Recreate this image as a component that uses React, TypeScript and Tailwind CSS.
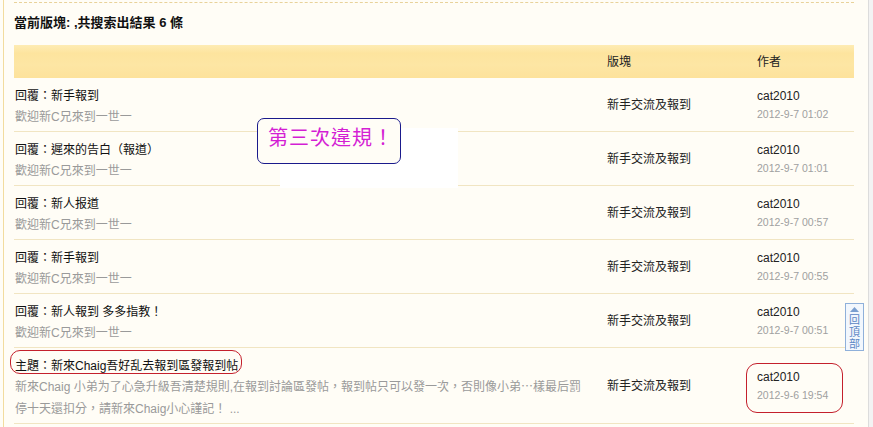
import React from 'react';

interface Post {
  title: string;
  summary: string[];
  board: string;
  author: string;
  date: string;
  marked?: boolean;
}

const posts: Post[] = [
  { title: '回覆：新手報到', summary: ['歡迎新C兄來到一世一'], board: '新手交流及報到', author: 'cat2010', date: '2012-9-7 01:02' },
  { title: '回覆：遲來的告白（報道）', summary: ['歡迎新C兄來到一世一'], board: '新手交流及報到', author: 'cat2010', date: '2012-9-7 01:01' },
  { title: '回覆：新人报道', summary: ['歡迎新C兄來到一世一'], board: '新手交流及報到', author: 'cat2010', date: '2012-9-7 00:57' },
  { title: '回覆：新手報到', summary: ['歡迎新C兄來到一世一'], board: '新手交流及報到', author: 'cat2010', date: '2012-9-7 00:55' },
  { title: '回覆：新人報到 多多指教！', summary: ['歡迎新C兄來到一世一'], board: '新手交流及報到', author: 'cat2010', date: '2012-9-7 00:51' },
  {
    title: '主題：新來Chaig吾好乱去報到區發報到帖',
    summary: [
      '新來Chaig 小弟为了心急升級吾清楚規則,在報到討論區發帖，報到帖只可以發一次，否則像小弟⋯樣最后罰',
      '停十天還扣分，請新來Chaig小心謹記！ ...',
    ],
    board: '新手交流及報到',
    author: 'cat2010',
    date: '2012-9-6 19:54',
    marked: true,
  },
];

const PostRow: React.FC<{ post: Post }> = ({ post }) => (
  <div className="grid grid-cols-[593px_150px_1fr] border-b border-[#f1e5c2]">
    <div className="pt-[8px] pb-[3px] pl-px">
      <div className="leading-[20px] text-[#111] whitespace-nowrap">
        <span className="relative inline-block">
          {post.title}
          {post.marked && (
            <span className="absolute left-[-5px] top-[-6px] w-[232px] h-[24px] rounded-[10px] border border-[#c4202c]" />
          )}
        </span>
      </div>
      {post.summary.map((line) => (
        <div key={line} className="leading-[22px] text-[#9a9a9a] whitespace-nowrap">
          {line}
        </div>
      ))}
    </div>
    <div className="flex items-center text-[#222]">{post.board}</div>
    <div className="relative flex flex-col justify-center">
      <div className="leading-[18px] text-[#222]">{post.author}</div>
      <div className="leading-[18px] text-[10.5px] text-[#a0a0a0]">{post.date}</div>
      {post.marked && (
        <span className="absolute left-[-11px] top-[15px] w-[97px] h-[50px] rounded-[11px] border border-[#c4202c]" />
      )}
    </div>
  </div>
);

export default function App() {
  return (
    <div className="relative w-[873px] h-[427px] overflow-hidden bg-[#fffdf6] text-[12px] font-['Liberation_Sans','Noto_Sans_CJK_TC',sans-serif] flex">
      <div className="ml-[3px] w-[852px] border-l border-[#f2dc9e] pl-[10px] pr-px">
        <div className="mt-[2px] border-t border-dashed border-[#e8d29a]" />
        <div className="h-[42px] pt-[12px] font-bold text-[13px] leading-[16px] text-[#111]">
          當前版塊: ,共搜索出結果 6 條
        </div>
        <div className="grid grid-cols-[593px_150px_1fr] h-[33px] items-center bg-[linear-gradient(#feecb4,#fde49e_25%,#fde6a4_60%,#fde29b)] text-[#222]">
          <div />
          <div>版塊</div>
          <div>作者</div>
        </div>
        {posts.map((post, i) => (
          <PostRow key={i} post={post} />
        ))}
      </div>
      <div className="flex-1" />
      <div className="w-[5px] border-l border-[#dcdcdc] bg-[#f3f3f3]" />

      {/* white patch left over behind the popup */}
      <div className="absolute left-[280px] top-[128px] w-[178px] h-[60px] bg-white" />
      <div className="absolute left-[257px] top-[118px] w-[144px] h-[46px] rounded-[7px] border border-[#1a1a8c] bg-[#fffdf6] pl-[10px] pt-[6px]">
        <span className="text-[20px] leading-[26px] text-[#d41fd4] tracking-[1px]">第三次違規！</span>
      </div>

      <div className="absolute left-[845px] top-[303px] w-[19px] h-[48px] border border-[#8fb0da] bg-[#f2f7fd] flex flex-col items-center pt-[3px]">
        <svg width="9" height="5" viewBox="0 0 9 5" className="mb-[2px] shrink-0">
          <path d="M4.5 0 L9 5 L0 5 Z" fill="#7a9fd0" />
        </svg>
        <span className="text-[11px] leading-[12px] text-[#5a86c4]">回</span>
        <span className="text-[11px] leading-[12px] text-[#5a86c4]">頂</span>
        <span className="text-[11px] leading-[12px] text-[#5a86c4]">部</span>
      </div>
    </div>
  );
}
